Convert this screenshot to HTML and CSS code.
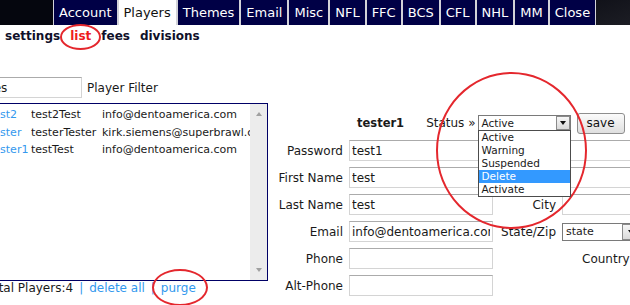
FILE: index.html
```html
<!doctype html>
<html lang="en">
    <head>
        <meta charset="UTF-8" />
        <title>Players</title>
        <link rel="stylesheet" href="styles.css">
    </head>
    <body>
        <div class="topbar">
            <ul class="tabs">
                <li><a href="#">Account</a></li>
                <li class="active"><a href="#">Players</a></li>
                <li><a href="#">Themes</a></li>
                <li><a href="#">Email</a></li>
                <li><a href="#">Misc</a></li>
                <li><a href="#">NFL</a></li>
                <li><a href="#">FFC</a></li>
                <li><a href="#">BCS</a></li>
                <li><a href="#">CFL</a></li>
                <li><a href="#">NHL</a></li>
                <li><a href="#">MM</a></li>
                <li><a href="#">Close</a></li>
            </ul>
        </div>

        <div class="subnav">
            <a href="#">settings</a>
            <a href="#" class="current">list</a>
            <a href="#">fees</a>
            <a href="#">divisions</a>
        </div>

        <div class="main">
            <!-- player list -->
            <div class="list-panel">
                <div class="filter-row">
                    <input class="field filter" type="text" value="tes" />
                    <span>Player Filter</span>
                </div>
                <div class="player-list">
                    <div class="rows">
                        <table>
                            <colgroup>
                                <col style="width: 42px" />
                                <col style="width: 71px" />
                                <col />
                            </colgroup>
                            <tr>
                                <td><a href="#">test2</a></td>
                                <td>test2Test</td>
                                <td>info@dentoamerica.com</td>
                            </tr>
                            <tr>
                                <td><a href="#">tester</a></td>
                                <td>testerTester</td>
                                <td>kirk.siemens@superbrawl.com</td>
                            </tr>
                            <tr>
                                <td><a href="#">tester1</a></td>
                                <td>testTest</td>
                                <td>info@dentoamerica.com</td>
                            </tr>
                        </table>
                    </div>
                    <div class="scrollbar">
                        <span class="arrow-up"></span>
                        <span class="arrow-down"></span>
                    </div>
                </div>
                <div class="list-footer">Total Players:4<span class="sep">|</span><a href="#">delete all</a><span class="sep">|</span><a href="#">purge</a></div>
            </div>

            <!-- player details -->
            <div class="player-form">
                <div class="player-head">
                    <span class="player-name">tester1</span>
                    <span class="status-label">Status &raquo;</span>
                    <div class="status-select">
                        <div class="select">
                            <span class="select-value">Active</span>
                            <span class="select-arrow"></span>
                        </div>
                        <ul class="select-menu">
                            <li>Active</li>
                            <li>Warning</li>
                            <li>Suspended</li>
                            <li class="hover">Delete</li>
                            <li>Activate</li>
                        </ul>
                    </div>
                    <button class="save-btn">save</button>
                </div>

                <div class="form-grid">
                    <label>Password</label>
                    <input class="field" type="text" value="test1" />
                    <span></span>
                    <input class="field" type="text" value="" />

                    <label>First Name</label>
                    <input class="field" type="text" value="test" />
                    <span></span>
                    <input class="field" type="text" value="" />

                    <label>Last Name</label>
                    <input class="field" type="text" value="test" />
                    <label>City</label>
                    <input class="field" type="text" value="" />

                    <label>Email</label>
                    <input class="field" type="text" value="info@dentoamerica.com" />
                    <label>State/Zip</label>
                    <div class="select state-select">
                        <span class="select-value">state</span>
                        <span class="select-arrow"></span>
                    </div>

                    <label>Phone</label>
                    <input class="field" type="text" value="" />
                    <span></span>
                    <label class="country">Country</label>

                    <label>Alt-Phone</label>
                    <input class="field" type="text" value="" />
                </div>
            </div>
        </div>

        <!-- red annotation rings -->
        <div class="mark mark-list"></div>
        <div class="mark mark-status"></div>
        <div class="mark mark-purge"></div>
    </body>
</html>
```

FILE: styles.css
```css
html,
body {
    margin: 0;
    padding: 0;
}

body {
    position: relative;
    width: 630px;
    height: 305px;
    overflow: hidden;
    background: #ffffff;
    font-family: "DejaVu Sans", Verdana, sans-serif;
    font-size: 12px;
    color: #1a1a1a;
}

a {
    color: #3399ee;
    text-decoration: none;
}

/* top tabs */
.topbar {
    height: 25px;
    background: linear-gradient(160deg, #05060e 70%, #1c1d24 100%);
}

.tabs {
    display: flex;
    gap: 2px;
    width: max-content;
    height: 25px;
    margin: 0 0 0 53px;
    padding: 0 1px;
    list-style: none;
    background: #d2d2d8;
}

.tabs a {
    display: block;
    height: 25px;
    line-height: 25px;
    padding: 0 5px;
    background: #000046;
    color: #ffffff;
    font-size: 13px;
}

.tabs .active a {
    background: #ffffff;
    color: #111111;
}

/* sub navigation */
.subnav {
    display: flex;
    gap: 10px;
    height: 16px;
    margin-top: 3px;
    padding-left: 5px;
    line-height: 16px;
    font-size: 12px;
    font-weight: bold;
}

.subnav a {
    color: #10102a;
}

.subnav a.current {
    color: #ee1c1c;
}

.main {
    display: flex;
    align-items: flex-start;
    margin-top: 33px;
}

.field {
    box-sizing: border-box;
    height: 21px;
    margin: 0;
    padding: 0 2px;
    border: 1px solid #d4d4d4;
    border-top-color: #ababab;
    background: #ffffff;
    font: 12px "DejaVu Sans", Verdana, sans-serif;
    color: #1a1a1a;
    outline: none;
}

/* list panel */
.list-panel {
    flex: none;
    width: 282px;
    margin-left: -14px;
}

.filter-row {
    display: flex;
    align-items: center;
    gap: 5px;
}

.filter {
    width: 96px;
}

.player-list {
    display: flex;
    box-sizing: border-box;
    height: 178px;
    margin-top: 5px;
    border: 1px solid #000066;
}

.rows {
    flex: 1;
    min-width: 0;
    padding: 2px 0 0 2px;
    overflow: hidden;
}

.rows table {
    width: 100%;
    border-collapse: collapse;
    table-layout: fixed;
    font-size: 11px;
    line-height: 17.5px;
}

.rows td {
    padding: 0;
    white-space: nowrap;
    overflow: hidden;
}

.scrollbar {
    flex: none;
    display: flex;
    flex-direction: column;
    justify-content: space-between;
    align-items: center;
    box-sizing: border-box;
    width: 17px;
    padding: 8px 0;
    background: #ececec;
}

.arrow-up,
.arrow-down {
    width: 0;
    height: 0;
    border-left: 3.5px solid transparent;
    border-right: 3.5px solid transparent;
}

.arrow-up {
    border-bottom: 4px solid #a0a0a0;
}

.arrow-down {
    border-top: 4px solid #a0a0a0;
}

.list-footer {
    line-height: 15px;
    white-space: nowrap;
}

.sep {
    margin: 0 6px;
    color: #3399ee;
}

/* player form */
.player-form {
    flex: none;
    margin-left: 2px;
    padding-top: 35px;
}

.player-head {
    display: flex;
    align-items: center;
    height: 22px;
    margin-bottom: 6px;
    padding-left: 87px;
}

.player-name {
    font-size: 11.5px;
    font-weight: bold;
}

.status-label {
    margin-left: 22px;
}

.status-select {
    position: relative;
    width: 93px;
    margin-left: 2px;
}

.select {
    display: flex;
    box-sizing: border-box;
    height: 16px;
    border: 1px solid #7a7a7a;
    background: #ffffff;
    font-size: 10.5px;
    line-height: 14px;
}

.select-value {
    flex: 1;
    padding-left: 3px;
}

.select-arrow {
    display: flex;
    align-items: center;
    justify-content: center;
    box-sizing: border-box;
    width: 14px;
    border: 1px solid #8a8a8a;
    background: linear-gradient(#f6f6f6, #dadada);
}

.select-arrow::before {
    content: "";
    border-left: 3.5px solid transparent;
    border-right: 3.5px solid transparent;
    border-top: 4px solid #111111;
}

.select-menu {
    position: absolute;
    top: 15px;
    left: 0;
    z-index: 2;
    box-sizing: border-box;
    width: 93px;
    margin: 0;
    padding: 0;
    list-style: none;
    border: 1px solid #4c4c4c;
    background: #ffffff;
    font-size: 10.5px;
    line-height: 13px;
}

.select-menu li {
    padding-left: 3px;
}

.select-menu li.hover {
    background: #3399ff;
    color: #ffffff;
}

.save-btn {
    box-sizing: border-box;
    width: 48px;
    height: 21px;
    margin-left: 6px;
    padding: 0;
    border: 1px solid #8e8e8e;
    border-radius: 3px;
    background: linear-gradient(#fbfbfb, #dfdfdf);
    font: 12px "DejaVu Sans", Verdana, sans-serif;
    color: #111111;
}

.form-grid {
    display: grid;
    grid-template-columns: 74px 144px 59px 120px;
    grid-auto-rows: 21px;
    column-gap: 5px;
    row-gap: 6px;
}

.form-grid label {
    align-self: center;
    padding-right: 1px;
    text-align: right;
    white-space: nowrap;
}

.form-grid .country {
    padding-left: 20px;
    text-align: left;
}

.state-select {
    align-self: center;
    width: 78px;
    height: 18px;
    font-size: 11px;
    line-height: 16px;
}

.state-select .select-arrow {
    width: 17px;
}

/* annotation rings */
.mark {
    position: absolute;
    box-sizing: border-box;
    border: 2px solid #e4272d;
    border-radius: 50%;
    pointer-events: none;
}

.mark-list {
    left: 60px;
    top: 24px;
    width: 41px;
    height: 26px;
}

.mark-status {
    left: 436px;
    top: 72px;
    width: 151px;
    height: 157px;
}

.mark-purge {
    left: 152px;
    top: 269px;
    width: 56px;
    height: 37px;
}
```
